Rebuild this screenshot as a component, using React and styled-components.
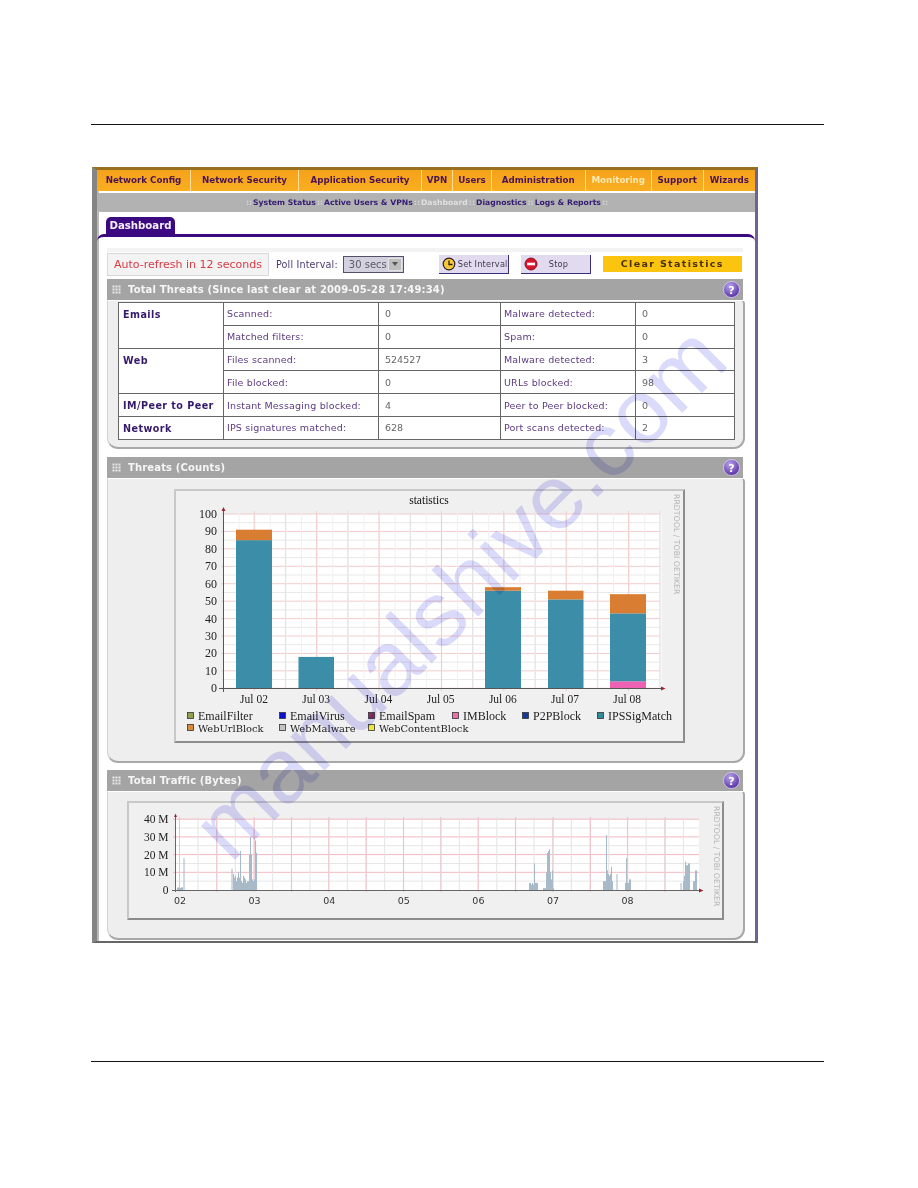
import React from "react";
import styled, { createGlobalStyle } from "styled-components";

const Global = createGlobalStyle`
  html, body { margin: 0; padding: 0; background: #fff; }
  * { box-sizing: border-box; }
`;
const UI = `"DejaVu Sans", Verdana, sans-serif`;
const SERIF = `"DejaVu Serif", "Liberation Serif", serif`;
const TIMES = `"Liberation Serif", serif`;

const Page = styled.div`
  position: relative; width: 918px; height: 1188px; overflow: hidden; background: #fff;
  padding-top: 124px;
`;
const Rule = styled.div`
  height: 1px; width: 733px; margin-left: 91px; background: #111;
  margin-top: ${p => p.$top || 0}px;
`;
const Shot = styled.div`
  width: 666px; height: 776px; margin: 42px 0 0 92px;
  border-left: 5px solid #858585; border-right: 3px solid #6d6590;
  border-top: 3px solid #96701f; border-bottom: 2px solid #666;
  display: flex; flex-direction: column; background: #fff;
  box-shadow: inset 2px 0 0 #bbb; filter: blur(.3px);
`;
const Nav = styled.div`
  display: flex; height: 21px; flex: none; background: linear-gradient(#f4a21a, #fbae22);
`;
const NavItem = styled.div`
  width: ${p => p.$w}px; flex: none; text-align: center;
  font: bold 8.7px/21px ${UI}; white-space: nowrap;
  color: ${p => (p.$on ? "#ffe9b0" : "#4a1450")};
  border-right: ${p => (p.$last ? 0 : "1px solid #ffdf9a")};
`;
const SubNav = styled.div`
  height: 19px; flex: none; margin-top: 2px; background: #b2b2b2; border-radius: 0 0 0 4px;
  text-align: center; font: bold 7.7px/19px ${UI}; color: #341a72; padding-left: 2px; white-space: nowrap;
`;
const Sep = styled.span`color: #d4d4d4; padding: 0 1px;`;
const SubOn = styled.span`color: #e0e0e0;`;
const TabRow = styled.div`display: flex; flex: none; margin-top: 5px; padding-left: 9px;`;
const Tab = styled.div`
  width: 69px; height: 17px; background: #3c0a80; border-radius: 5px 5px 0 0; color: #f4eefa;
  font: bold 10.2px/18px ${UI}; text-align: center;
`;
const TabPanel = styled.div`
  flex: 1; border-top: 3px solid #3c0a80; border-radius: 7px 7px 0 0; padding: 11px 10px 0;
  display: flex; flex-direction: column; align-items: flex-start;
`;
const Toolbar = styled.div`
  width: 636px; height: 31px; flex: none; display: flex; align-items: center;
  background: linear-gradient(#f3f3f3 0, #f3f3f3 4px, #fff 4px);
  padding-bottom: 3px; padding-top: 4px;
`;
const RefreshBox = styled.div`
  width: 162px; height: 23px; background: #f3f3f3; border: 1px solid #d8d8d8; color: #d83a45;
  font: 11px/21px ${UI}; text-align: center; white-space: nowrap;
`;
const PollLabel = styled.span`
  margin-left: 7px; font: 9.6px ${UI}; color: #4b3a72; white-space: nowrap; letter-spacing: .15px;
`;
const Select = styled.div`
  margin-left: 5px; width: 61px; height: 17px; background: #d3d1de; border: 1px solid #55506a;
  display: flex; align-items: center; justify-content: space-between;
  font: 10px ${UI}; color: #5a5a6a; padding-left: 5px; white-space: nowrap;
`;
const SelectArrow = styled.span`
  width: 14px; height: 13px; margin-right: 1px; background: #bdbdbd; border: 1px solid #e4e4e4;
  display: flex; align-items: center; justify-content: center;
`;
const Button = styled.div`
  width: 70px; height: 19px; margin-left: ${p => p.$ml}px; background: #e2dbf0;
  border-right: 1px solid #34307a; border-bottom: 1px solid #34307a;
  display: flex; align-items: center; gap: ${p => p.$gap}px; padding-left: 3px;
  font: 8.2px ${UI}; letter-spacing: .2px; color: #3c3a50; white-space: nowrap;
`;
const ClearBtn = styled.div`
  width: 139px; height: 16px; margin-left: 12px; background: #fbc40e; text-align: center;
  font: bold 9.5px/16px ${UI}; letter-spacing: 1.35px; color: #4a3012; white-space: nowrap;
`;
const Header = styled.div`
  width: 636px; height: 21px; flex: none; background: #a4a4a4; display: flex; align-items: center;
  padding: 0 3px 0 5px; gap: 7px; font: bold 10px ${UI}; color: #f6f6f6; white-space: nowrap;
`;
const HeaderTitle = styled.span`flex: 1; letter-spacing: .15px;`;
const Body = styled.div`
  width: 638px; height: ${p => p.$h}px; flex: none; background: #eeeeee; margin-bottom: ${p => p.$mb}px;
  border: 1px solid #d2d2d2; border-top: 1px solid #fff; border-right: 2px solid #a8a8a8; border-bottom: 2px solid #a8a8a8;
  border-radius: 0 4px 11px 11px; padding: ${p => p.$pad};
`;
const Table = styled.table`
  border-collapse: collapse; table-layout: fixed; width: 616px; background: #fff;
  border: 1px solid #666;
  td { border: 1px solid #666; height: 22.8px; padding: 0 3px; white-space: nowrap; vertical-align: middle; }
`;
const Cat = styled.td`
  && { vertical-align: top; padding: 6px 4px 0; font: bold 9.6px ${UI}; color: #351a6c; letter-spacing: .45px; }
`;
const Lab = styled.td`font: 9.5px ${UI}; color: #5c3a80; letter-spacing: .17px;`;
const Val = styled.td`&& { padding-left: 6px; } font: 9.5px ${UI}; color: #666;`;
const ChartBox = styled.div`
  width: ${p => p.$w}px; height: ${p => p.$h}px; background: #f0f0f0;
  border-right: 2px solid #8c8c8c; border-bottom: 2px solid #8c8c8c;
  border-top: 2px solid #c8c8c8; border-left: 2px solid #c8c8c8;
  svg { display: block; }
`;
const Watermark = styled.div`
  position: absolute; left: 459px; top: 592px; transform: translate(-50%, -50%) rotate(-45deg);
  font: 91px "Liberation Sans", Arial, sans-serif; color: #dadafa; mix-blend-mode: multiply;
  white-space: nowrap; pointer-events: none;
`;

const Grip = () => (
  <svg width="9" height="9" viewBox="0 0 9 9">
    {[0, 3, 6].flatMap(x => [0, 3, 6].map(y => <rect key={`${x}${y}`} x={x + .5} y={y + .5} width="2" height="2" fill="#e8e8e8" />))}
  </svg>
);
const Help = () => (
  <svg width="17" height="17" viewBox="0 0 17 17">
    <defs>
      <radialGradient id="hg" cx=".4" cy=".3" r=".8"><stop offset="0" stopColor="#b9a4ee" /><stop offset="1" stopColor="#4a2199" /></radialGradient>
    </defs>
    <circle cx="8.5" cy="8.5" r="8" fill="url(#hg)" stroke="#ded6f2" strokeWidth=".8" />
    <text x="8.5" y="12.5" textAnchor="middle" fontFamily={UI} fontWeight="bold" fontSize="11" fill="#fff">?</text>
  </svg>
);
const Clock = () => (
  <svg width="14" height="14" viewBox="0 0 14 14">
    <circle cx="7" cy="7" r="5.8" fill="#f7c93a" stroke="#2a2020" strokeWidth="1.2" />
    <path d="M7 3.5V7.5H10.5" fill="none" stroke="#2a2020" strokeWidth="1.3" />
  </svg>
);
const StopIcon = () => (
  <svg width="14" height="14" viewBox="0 0 14 14">
    <circle cx="7" cy="7" r="6" fill="#d8142a" stroke="#8a1020" strokeWidth="1" />
    <rect x="3" y="5.7" width="8" height="2.6" fill="#fff" />
  </svg>
);

const range = (a, b, s) => { const o = []; for (let v = a; v <= b + .01; v += s) o.push(v); return o; };

const Y1 = v => 688.3 - v * 1.743;
const bars = [
  { x: 236, w: 36, parts: [[0, 85, "#3b8da8"], [85, 91, "#d97d33"]] },
  { x: 298.5, w: 35.5, parts: [[0, 18, "#3b8da8"]] },
  { x: 485, w: 36, parts: [[0, 56, "#3b8da8"], [56, 58, "#d97d33"]] },
  { x: 548, w: 35.5, parts: [[0, 51, "#3b8da8"], [51, 56, "#d97d33"]] },
  { x: 610, w: 36, parts: [[0, 4, "#ee62b4"], [4, 43, "#3b8da8"], [43, 54, "#d97d33"]] },
];
const legend = [
  [187, 712, "#8f9f50", "EmailFilter"], [279, 712, "#0a10d0", "EmailVirus"], [368, 712, "#8c2f62", "EmailSpam"],
  [452, 712, "#ee70aa", "IMBlock"], [522, 712, "#123a96", "P2PBlock"], [597, 712, "#2f8c98", "IPSSigMatch"],
  [187, 724, "#d98a3a", "WebUrlBlock"], [279, 724, "#c4c4c4", "WebMalware"], [368, 724, "#efe83a", "WebContentBlock"],
];

const Chart1 = () => (
  <svg width="507" height="250" viewBox="176 491 507 250">
    <text x="429" y="504" textAnchor="middle" fontFamily={TIMES} fontSize="11.5" fill="#111">statistics</text>
    <rect x="223.5" y="514" width="438" height="174.3" fill="#fff" />
    {range(0, 100, 5).map(v => <line key={v} x1="221" x2="661" y1={Y1(v)} y2={Y1(v)} stroke={v % 10 ? "#e8e8e8" : "#f2cccc"} />)}
    {range(223.5, 661, 15.6).map((x, i) => <line key={i} x1={x} x2={x} y1="511" y2="688" stroke="#f0f0f0" />)}
    {range(285.4, 661, 62.4).map(x => <line key={x} x1={x} x2={x} y1="511" y2="688" stroke="#e2e2e2" />)}
    {range(254.2, 661, 62.4).map(x => <line key={x} x1={x} x2={x} y1="511" y2="691" stroke="#f0cccc" />)}
    {bars.flatMap(b => b.parts.map(([a, c, f]) => <rect key={b.x + f} x={b.x} width={b.w} y={Y1(c)} height={Y1(a) - Y1(c)} fill={f} />))}
    <line x1="223.5" x2="223.5" y1="510" y2="692" stroke="#555" />
    <line x1="219" x2="662" y1="688.5" y2="688.5" stroke="#555" />
    <path d="M221.5 511L223.5 507L225.5 511Z" fill="#a02030" />
    <path d="M661 686.5L665.5 688.5L661 690.5Z" fill="#a02030" />
    {range(0, 100, 10).map(v => <text key={v} x="217" y={Y1(v) + 4} textAnchor="end" fontFamily={TIMES} fontSize="11.5" textLength={v === 100 ? 18 : v ? 12 : 6} lengthAdjust="spacingAndGlyphs" fill="#222">{v}</text>)}
    {["Jul 02", "Jul 03", "Jul 04", "Jul 05", "Jul 06", "Jul 07", "Jul 08"].map((t, i) => (
      <text key={t} x={254 + i * 62.2} y="703" textAnchor="middle" fontFamily={TIMES} fontSize="11.5" fill="#222">{t}</text>
    ))}
    {legend.map(([x, y, c, t]) => (
      <g key={t}>
        <rect x={x + .5} y={y + .5} width="6" height="6" fill={c} stroke="#333" strokeWidth=".8" />
        <text x={x + 11} y={y + 7.5} fontFamily={t.startsWith("Web") ? SERIF : TIMES} fontSize={t.startsWith("Web") ? 9.9 : 12} fill="#222">{t}</text>
      </g>
    ))}
    <text transform="translate(673.5 494) rotate(90)" fontFamily={UI} fontSize="7.8" fill="#b4b4b4">RRDTOOL / TOBI OETIKER</text>
  </svg>
);

const spikes = [
  [177, 1.2], [178, 1.5], [179, 1.3], [180, 1.2], [181, 1.5], [182, 1.5], [183.5, 18],
  [231.5, 12], [233, 9], [234, 7], [235, 8], [236, 5], [237, 7], [238, 10], [239, 7], [240, 22], [241, 5], [242, 4], [243, 8], [244, 7], [245, 6], [246, 4], [247, 5], [248, 5], [249, 20], [250, 30], [251, 20], [252, 6], [253, 5], [254, 6], [255, 28], [256, 21],
  [529, 4], [530, 4], [531, 3], [532, 4], [533, 3], [534, 15], [535, 4], [536, 4], [537, 4],
  [543, 1], [544, 1], [545, 1], [546, 10], [547, 21], [548, 22], [549, 23], [550, 10], [551, 6], [552, 11], [553, 1],
  [603, 5], [604, 5], [605, 5], [606, 31], [607, 11], [608, 9], [609, 8], [610, 9], [611, 13], [612, 5], [616.5, 9],
  [625, 4], [626, 18], [627, 4], [628, 4], [629, 6], [630, 6],
  [680.5, 4], [683, 5], [684, 8], [685, 16], [686, 14], [687, 14], [688, 15], [689, 15], [693, 5], [694, 5], [695, 11], [696, 11],
];
const Y2 = v => 890 - v * 1.77;

const Chart2 = () => (
  <svg width="593" height="115" viewBox="129 803 593 115">
    <rect x="175.5" y="819" width="523.5" height="71" fill="#fff" />
    {range(5, 40, 5).map(v => <line key={v} x1="173" x2="699" y1={Y2(v)} y2={Y2(v)} stroke={v % 10 ? "#e6e6e6" : "#f0b8c0"} />)}
    {range(198, 699, 18.67).map((x, i) => <line key={i} x1={x} x2={x} y1="817" y2="890" stroke="#e4e4e4" />)}
    {range(179.5, 699, 37.35).map(x => <line key={x} x1={x} x2={x} y1="817" y2="892" stroke="#eec0c8" />)}
    {spikes.map(([x, v]) => <rect key={x} x={x} y={Y2(v)} width="1.05" height={Y2(0) - Y2(v)} fill="#a8b9c8" />)}
    <line x1="175.5" x2="175.5" y1="816" y2="892" stroke="#666" />
    <line x1="172" x2="700" y1="890.5" y2="890.5" stroke="#666" />
    <path d="M174 817L175.5 813.5L177 817Z" fill="#a02030" />
    <path d="M699 888.5L703.5 890.5L699 892.5Z" fill="#a02030" />
    {["0", "10 M", "20 M", "30 M", "40 M"].map((t, i) => (
      <text key={t} x="168.5" y={Y2(i * 10) + 4} textAnchor="end" fontFamily={TIMES} fontSize="11.5" fill="#222">{t}</text>
    ))}
    {["02", "03", "04", "05", "06", "07", "08"].map((t, i) => (
      <text key={t} x={180 + i * 74.6} y="904" textAnchor="middle" fontFamily={UI} fontSize="9.5" fill="#333">{t}</text>
    ))}
    <text transform="translate(714 806) rotate(90)" fontFamily={UI} fontSize="7.8" fill="#b4b4b4">RRDTOOL / TOBI OETIKER</text>
  </svg>
);

const navItems = [
  ["Network Config", 94], ["Network Security", 108], ["Application Security", 123], ["VPN", 31], ["Users", 39],
  ["Administration", 93.5], ["Monitoring", 66.5], ["Support", 51.5], ["Wizards", 51.5],
];

const rows = [
  [["Emails", 2], "Scanned:", "0", "Malware detected:", "0"],
  [null, "Matched filters:", "0", "Spam:", "0"],
  [["Web", 2], "Files scanned:", "524527", "Malware detected:", "3"],
  [null, "File blocked:", "0", "URLs blocked:", "98"],
  [["IM/Peer to Peer", 1], "Instant Messaging blocked:", "4", "Peer to Peer blocked:", "0"],
  [["Network", 1], "IPS signatures matched:", "628", "Port scans detected:", "2"],
];

const PanelHead = ({ children }) => (
  <Header><Grip /><HeaderTitle>{children}</HeaderTitle><Help /></Header>
);

export default function App() {
  return (
    <Page>
      <Global />
      <Rule />
      <Shot>
        <Nav>
          {navItems.map(([t, w], i) => <NavItem key={t} $w={w} $on={t === "Monitoring"} $last={i === 8}>{t}</NavItem>)}
        </Nav>
        <SubNav>
          <Sep>::</Sep>System Status<Sep>::</Sep>Active Users &amp; VPNs<Sep>::</Sep><SubOn>Dashboard</SubOn><Sep>::</Sep>Diagnostics<Sep>::</Sep>Logs &amp; Reports<Sep>::</Sep>
        </SubNav>
        <TabRow><Tab>Dashboard</Tab></TabRow>
        <TabPanel>
          <Toolbar>
            <RefreshBox>Auto-refresh in 12 seconds</RefreshBox>
            <PollLabel>Poll Interval:</PollLabel>
            <Select>30 secs<SelectArrow><svg width="6" height="4" viewBox="0 0 6 4"><path d="M0 0H6L3 4Z" fill="#555" /></svg></SelectArrow></Select>
            <Button $ml={35} $gap={2}><Clock />Set Interval</Button>
            <Button $ml={12} $gap={11}><StopIcon />Stop</Button>
            <ClearBtn>Clear Statistics</ClearBtn>
          </Toolbar>
          <PanelHead>Total Threats (Since last clear at 2009-05-28 17:49:34)</PanelHead>
          <Body $h={149} $mb={8} $pad="1px 0 0 10px">
            <Table>
              <colgroup><col width="105" /><col width="155" /><col width="122" /><col width="135" /><col width="99" /></colgroup>
              <tbody>
                {rows.map((r, i) => (
                  <tr key={i}>
                    {r[0] && <Cat rowSpan={r[0][1]}>{r[0][0]}</Cat>}
                    <Lab>{r[1]}</Lab><Val>{r[2]}</Val><Lab>{r[3]}</Lab><Val>{r[4]}</Val>
                  </tr>
                ))}
              </tbody>
            </Table>
          </Body>
          <PanelHead>Threats (Counts)</PanelHead>
          <Body $h={285} $mb={7} $pad="10px 0 0 66px">
            <ChartBox $w={511} $h={254}><Chart1 /></ChartBox>
          </Body>
          <PanelHead>Total Traffic (Bytes)</PanelHead>
          <Body $h={149} $mb={0} $pad="9px 0 0 19px">
            <ChartBox $w={597} $h={119}><Chart2 /></ChartBox>
          </Body>
        </TabPanel>
      </Shot>
      <Rule $top={118} />
      <Watermark>manualshive.com</Watermark>
    </Page>
  );
}
